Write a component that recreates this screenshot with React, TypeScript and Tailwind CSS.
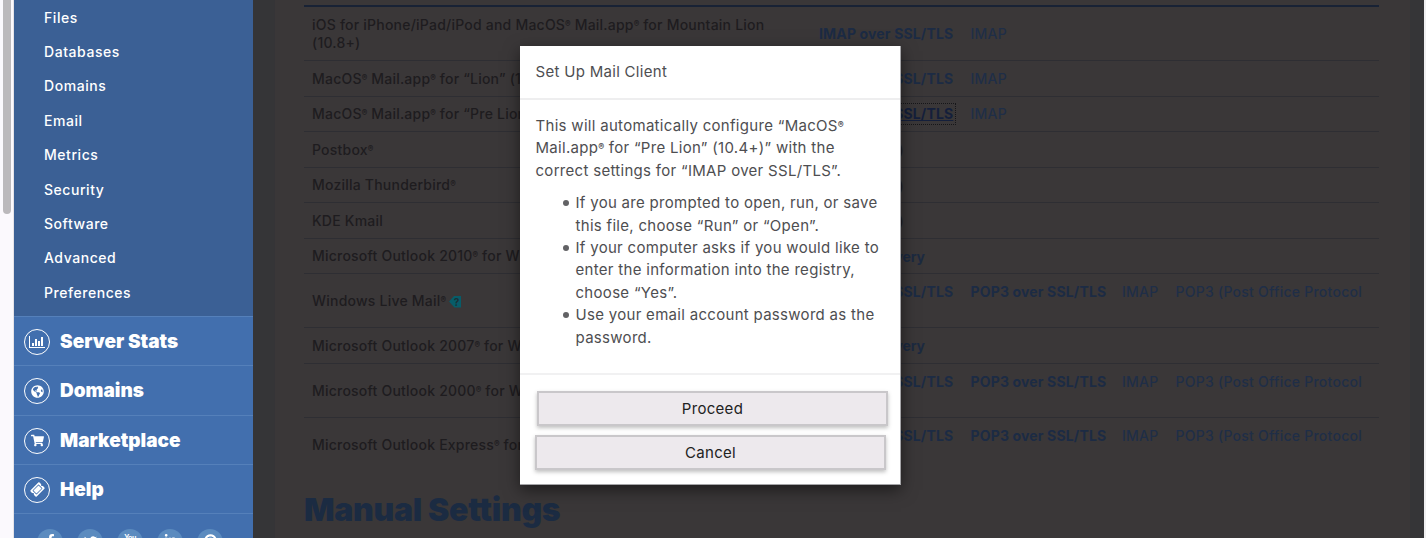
import type { ReactNode } from "react"
import { FaFacebookF, FaTwitter, FaLinkedinIn, FaPinterest, FaShoppingCart, FaTicketAlt, FaGlobeAmericas } from "react-icons/fa"

const subItems = ["Files", "Databases", "Domains", "Email", "Metrics", "Security", "Software", "Advanced", "Preferences"]

const StatsIcon = () => (
  <svg width="16" height="12" viewBox="0 0 16 12" fill="currentColor">
    <path d="M0 0h1v11h15v1H0zM3 7h2v3H3zM6 3h2v7H6zM9 5h2v5H9zM12 1h2v9h-2z" />
  </svg>
)

const sections: { label: string; icon: ReactNode }[] = [
  { label: "Server Stats", icon: <StatsIcon /> },
  { label: "Domains", icon: <FaGlobeAmericas size={13} /> },
  { label: "Marketplace", icon: <FaShoppingCart size={13} /> },
  { label: "Help", icon: <FaTicketAlt size={13} className="-rotate-45" /> },
]

const socials: ReactNode[] = [
  <FaFacebookF size={13} />,
  <FaTwitter size={13} className="mt-[1px]" />,
  <span className="text-[7px] font-bold leading-[7px] tracking-[-0.5px]">You</span>,
  <FaLinkedinIn size={13} />,
  <FaPinterest size={13} />,
]

interface Link {
  text: string
  bold?: boolean
  focused?: boolean
}

interface Row {
  name: string
  height: string
  help?: boolean
  links?: Link[]
  note?: string
  discovery?: boolean
}

const imap: Link[] = [{ text: "IMAP over SSL/TLS", bold: true }, { text: "IMAP" }]
const all: Link[] = [
  { text: "IMAP over SSL/TLS", bold: true },
  { text: "POP3 over SSL/TLS", bold: true },
  { text: "IMAP" },
  { text: "POP3 (Post Office Protocol" },
]

const rows: Row[] = [
  { name: "iOS for iPhone/iPad/iPod and MacOS® Mail.app® for Mountain Lion (10.8+)", height: "h-[54px]", links: imap },
  { name: "MacOS® Mail.app® for “Lion” (10.7+)", height: "h-[36px]", links: imap },
  { name: "MacOS® Mail.app® for “Pre Lion” (10.4+)", height: "h-[35px]", links: [{ ...imap[0], focused: true }, imap[1]] },
  { name: "Postbox®", height: "h-[36px]", note: "(Manual)" },
  { name: "Mozilla Thunderbird®", height: "h-[35px]", note: "(Manual)" },
  { name: "KDE Kmail", height: "h-[36px]", note: "(Manual)" },
  { name: "Microsoft Outlook 2010® for Windows", height: "h-[35px]", discovery: true },
  { name: "Windows Live Mail®", height: "h-[54px]", help: true, links: all },
  { name: "Microsoft Outlook 2007® for Windows", height: "h-[36px]", discovery: true },
  { name: "Microsoft Outlook 2000® for Windows", height: "h-[54px]", links: all },
  { name: "Microsoft Outlook Express® for Windows", height: "h-[54px]", links: all },
]

// small raised ® marks
const Marked = ({ text }: { text: string }) => (
  <span>
    {text.split("®").map((part, i) => (
      <span key={i}>
        {i > 0 && <span className="inline-block -translate-y-[3px] text-[0.6em] font-bold leading-none tracking-normal">®</span>}
        {part}
      </span>
    ))}
  </span>
)

const Sidebar = () => (
  <aside className="flex w-[239px] shrink-0 flex-col bg-[#426fae] text-white">
    <nav className="flex h-[316px] shrink-0 flex-col bg-[#3b6095]">
      {subItems.map((item) => (
        <a key={item} className="flex h-[34.4px] shrink-0 items-center pl-[30px] text-[14px] font-medium tracking-[0.55px]">
          {item}
        </a>
      ))}
    </nav>
    {sections.map(({ label, icon }) => (
      <a key={label} className="flex h-[49.25px] shrink-0 items-center border-t border-[#5580ba] pl-[10px] pt-[2px]">
        <span className="flex h-[26px] w-[26px] items-center justify-center rounded-full border border-white">{icon}</span>
        <span className="ml-[10px] text-[19px] font-black leading-[26px]">{label}</span>
      </a>
    ))}
    <div className="flex gap-[14px] border-t border-[#5580ba] pl-[23px] pt-[15px]">
      {socials.map((icon, i) => (
        <span key={i} className="flex h-[26px] w-[26px] shrink-0 justify-center rounded-full bg-[#5b8bbf] pt-[5px]">
          {icon}
        </span>
      ))}
    </div>
  </aside>
)

const ClientRow = ({ name, height, help, links, note, discovery }: Row) => (
  <div className={`flex shrink-0 items-center border-b border-[#2e2e33] pl-[8px] last:border-0 ${height}`}>
    <div className="flex w-[507px] shrink-0 items-center gap-[3px] pr-[40px] leading-[18px]">
      <Marked text={name} />
      {help && (
        <span className="mt-[2px] flex h-[12px] w-[12px] shrink-0 items-center justify-center bg-[#075c69] pl-[3px] text-[10px] font-bold leading-none tracking-normal text-[#1b3036] [clip-path:polygon(45%_0,100%_0,100%_100%,45%_100%,0_50%)]">
          ?
        </span>
      )}
    </div>
    {note && <span className="w-[85px] whitespace-nowrap text-right">{note}</span>}
    {discovery && <span className="whitespace-nowrap font-bold tracking-[-0.2px] text-[#1c2a40]">Auto-Discovery</span>}
    {links && (
      <div className={`flex flex-1 items-start gap-[17px] text-[#1f2e47] ${links.length > 2 ? "h-[36px]" : ""}`}>
        {links.map(({ text, bold, focused }) => (
          <span
            key={text}
            className={`whitespace-nowrap leading-[18px] ${bold ? "w-[134.5px] font-bold tracking-[0.15px]" : "tracking-[0.25px]"} ${focused ? "text-[#141f3b] underline outline-1 outline-offset-1 outline-dotted outline-[#161619]" : bold ? "text-[#1c2b44]" : ""}`}
          >
            {text}
          </span>
        ))}
      </div>
    )}
  </div>
)

const modalButton =
  "flex h-[35px] w-[351px] items-center justify-center border-2 border-[#c9c7ca] bg-[#ede9ed] pt-[2px] text-[#222] shadow-[0_2px_4px_rgba(0,0,0,0.25)]"

const MailClientModal = () => (
  <div className="absolute left-[520px] top-[46px] flex h-[439px] w-[381px] flex-col border-b border-r border-[#a5a5a8] bg-white text-[15px] tracking-[0.3px] text-[#4e4e51] shadow-[0_5px_15px_rgba(0,0,0,0.5)]">
    <header className="flex h-[54px] shrink-0 items-center border-b-2 border-[#eeeeef] pl-[15.5px]">Set Up Mail Client</header>
    <div className="h-[273px] shrink-0 whitespace-nowrap pl-[15.5px] pt-[15px] leading-[22.4px]">
      <p>
        <Marked text="This will automatically configure “MacOS®" />
        <br />
        <Marked text="Mail.app® for “Pre Lion” (10.4+)” with the" />
        <br />
        correct settings for “IMAP over SSL/TLS”.
      </p>
      <ul className="mt-[10px] list-none pl-[40px] [&>li]:relative [&>li]:before:absolute [&>li]:before:left-[-13px] [&>li]:before:top-[8px] [&>li]:before:h-[6px] [&>li]:before:w-[6px] [&>li]:before:rounded-full [&>li]:before:bg-[#626265]">
        <li>
          If you are prompted to open, run, or save
          <br />
          this file, choose “Run” or “Open”.
        </li>
        <li>
          If your computer asks if you would like to
          <br />
          enter the information into the registry,
          <br />
          choose “Yes”.
        </li>
        <li>
          Use your email account password as the
          <br />
          password.
        </li>
      </ul>
    </div>
    <footer className="flex flex-col gap-[9px] border-t-2 border-[#f1f1f2] pl-[15px] pt-[16px]">
      <button className={`${modalButton} ml-[2px]`}>Proceed</button>
      <button className={modalButton}>Cancel</button>
    </footer>
  </div>
)

const App = () => (
  <div className="relative flex h-[538px] w-[1426px] overflow-hidden bg-[#353537] font-[Inter,sans-serif]">
    <div className="w-[14px] shrink-0 border-r border-[#e5e3e8] bg-[#fbf9fd] pl-[3px]">
      <div className="h-[214px] w-[8px] rounded-b-full bg-[#bbb9bc]" />
    </div>
    <Sidebar />
    <main className="ml-[21px] w-[1136px] shrink-0 overflow-hidden border-l border-[#353437] bg-[#3a3738] pl-[29px] text-[14px] font-medium tracking-[0.22px] text-[#1e1c1f]">
      <div className="mt-[5px] flex w-[1075px] flex-col border-t-2 border-[#182235]">
        {rows.map((row) => (
          <ClientRow key={row.name} {...row} />
        ))}
      </div>
      <h2 className="mt-[18px] text-[32px] font-black leading-[40px] tracking-[-0.3px] text-[#1b2b42]">Manual Settings</h2>
    </main>
    <div className="ml-auto w-[2px] bg-[#f0f0f1]" />
    <MailClientModal />
  </div>
)

export default App
